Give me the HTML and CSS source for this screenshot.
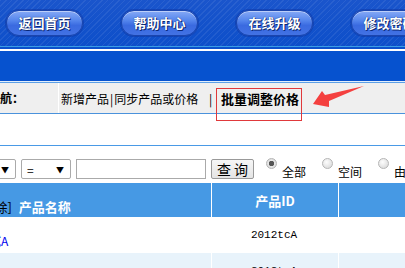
FILE: index.html
```html
<!DOCTYPE html>
<html lang="zh-CN">
<head>
    <meta charset="UTF-8">
    <meta name="viewport" content="width=device-width, initial-scale=1.0">
    <title>批量调整价格</title>
    <link rel="stylesheet" href="styles.css">
</head>
<body>
    <div class="page">
        <div class="top">
            <a class="top-btn">返回首页</a>
            <a class="top-btn">帮助中心</a>
            <a class="top-btn">在线升级</a>
            <a class="top-btn">修改密码</a>
        </div>
        <div class="band"></div>

        <div class="nav-rule"></div>
        <div class="navbar">
            <div class="nav-label">当前导航：</div>
            <div class="nav-links">
                <span>新增产品</span><span class="bar">|</span><span>同步产品或价格</span>
                <span class="sep">|</span>
                <span class="current">批量调整价格</span>
            </div>
        </div>
        <div class="blank"></div>

        <div class="search">
            <div class="sel sel-first"><span class="sel-val">名称</span><span class="arrow">▼</span></div>
            <div class="sel"><span class="sel-val">=</span><span class="arrow">▼</span></div>
            <div class="text-input"></div>
            <div class="btn">查 询</div>
            <label class="radio"><span class="dot checked"></span><span>全部</span></label>
            <label class="radio"><span class="dot"></span><span>空间</span></label>
            <label class="radio"><span class="dot"></span><span>由</span></label>
        </div>

        <div class="grid">
            <div class="th th-name"><span class="del">[删除]</span>产品名称</div>
            <div class="th">产品ID</div>
            <div class="th">产品</div>

            <div class="td td-name"><span class="link">测试A</span></div>
            <div class="td mono">2012tcA</div>
            <div class="td"></div>

            <div class="td alt td-name"></div>
            <div class="td alt mono">2012tcA</div>
            <div class="td alt"></div>
        </div>

        <!-- 标注 -->
        <div class="mark-box"></div>
        <svg class="mark-arrow" width="60" height="26" viewBox="0 0 60 26">
            <polygon points="1,18 10,5 13,9 52,0 17,15 17,21" fill="#f4403f"/>
        </svg>
    </div>
</body>
</html>
```

FILE: styles.css
```css
body {
    margin: 0;
    width: 405px;
    height: 268px;
    overflow: hidden;
    font-family: "Noto Sans CJK SC", sans-serif;
    font-size: 12px;
    color: #000;
    background: #fff;
}
.page {
    position: relative;
    width: 405px;
}
.top {
    height: 47px;
    border-bottom: 1px solid #3a9de6;
    background:
        repeating-linear-gradient(135deg, rgba(255,255,255,0.07) 0 1px, transparent 1px 4px),
        linear-gradient(#1a55cc, #0d4fca);
    display: flex;
    align-items: flex-start;
    gap: 38px;
    padding: 10px 0 0 6px;
    box-sizing: border-box;
    white-space: nowrap;
}
.top-btn {
    flex: none;
    width: 77px;
    height: 26px;
    box-sizing: border-box;
    border-radius: 13px;
    border: 1px solid #1b45ad;
    background: linear-gradient(#86a9f6 0%, #5485ec 40%, #3a6ae0 60%, #4272e4 100%);
    box-shadow: inset 0 1px 0 rgba(255,255,255,0.45), 0 0 0 1px rgba(15,55,165,0.55);
    color: #fff;
    font-size: 13px;
    font-weight: bold;
    line-height: 24px;
    text-align: center;
    text-shadow: 0 0 1px #061a5a, 1px 1px 0 #0b2a78;
}
.band {
    height: 34px;
    background: linear-gradient(#0b50cc 0 2px, #fff 2px 4px, #0652cf 4px);
}
.nav-rule {
    height: 1px;
    background: #e2eefb;
    border-bottom: 1px solid #5c9fe6;
}
.navbar {
    height: 30px;
    background: #efefef;
    border-bottom: 1px solid #4a92dc;
    display: flex;
    align-items: center;
    white-space: nowrap;
}
.nav-label {
    flex: none;
    width: 94px;
    margin-left: -36px;
    height: 30px;
    line-height: 30px;
    font-weight: bold;
    font-size: 12px;
    border-right: 1px solid #fff;
}
.nav-links {
    padding-left: 2px;
    font-size: 12px;
}
.bar {
    margin: 0 1px;
}
.sep {
    margin: 0 6px 0 8px;
}
.current {
    font-weight: bold;
    font-size: 13px;
}
.blank {
    height: 31px;
    border-bottom: 1px solid #4a9ae6;
}
.search {
    display: flex;
    align-items: flex-start;
    padding-top: 13px;
    height: 24px;
    white-space: nowrap;
}
.sel {
    flex: none;
    width: 50px;
    height: 20px;
    box-sizing: border-box;
    border: 1px solid #aaa;
    border-radius: 2px;
    display: flex;
    justify-content: space-between;
    align-items: center;
    padding: 0 6px 0 5px;
    margin-right: 5px;
    font-size: 12px;
}
.sel-first {
    margin-left: -34px;
}
.arrow {
    font-size: 8px;
}
.text-input {
    flex: none;
    width: 130px;
    height: 20px;
    box-sizing: border-box;
    border: 1px solid #aaa;
    margin-right: 5px;
}
.btn {
    flex: none;
    width: 43px;
    height: 20px;
    box-sizing: border-box;
    border: 1px solid #999;
    border-radius: 2px;
    background: linear-gradient(#f6f6f6, #e4e4e4);
    font-size: 14px;
    line-height: 18px;
    text-align: center;
    margin-right: 12px;
}
.radio {
    display: flex;
    align-items: flex-start;
    gap: 5px;
    margin-right: 16px;
}
.radio span:last-child {
    margin-top: 5px;
    line-height: 16px;
}
.dot {
    width: 11px;
    height: 11px;
    margin-top: -1px;
    border-radius: 50%;
    box-sizing: border-box;
    border: 1px solid #b5b5b5;
    background: radial-gradient(circle at 40% 35%, #fdfdfd, #d4d4d4);
}
.dot.checked {
    background: radial-gradient(circle, #555 0 2.5px, #e8e8e8 3px, #cfcfcf);
}
.grid {
    display: grid;
    grid-template-columns: 211px 126px 200px;
    column-gap: 1px;
    background: #fff;
}
.th {
    height: 34px;
    background: #4699e4;
    color: #fff;
    font-weight: bold;
    font-size: 13px;
    display: flex;
    align-items: center;
    justify-content: center;
    white-space: nowrap;
}
.th-name {
    justify-content: flex-start;
    padding-top: 13px;
    box-sizing: border-box;
}
.del {
    margin-left: -23px;
    margin-right: 7px;
    color: #000;
    font-weight: normal;
}
.td {
    height: 36px;
    display: flex;
    align-items: center;
    justify-content: center;
    white-space: nowrap;
}
.alt {
    background: #e8f3fb;
}
.td-name {
    justify-content: flex-start;
    padding-top: 11px;
    box-sizing: border-box;
}
.link {
    color: #0000ee;
    margin-left: -23px;
}
.mono {
    font-family: "Liberation Mono", monospace;
    font-size: 11px;
    padding-right: 2px;
}
.mark-box {
    position: absolute;
    left: 216px;
    top: 88px;
    width: 86px;
    height: 33px;
    box-sizing: border-box;
    border: 1px solid #e0393b;
}
.mark-arrow {
    position: absolute;
    left: 312px;
    top: 86px;
}
```
